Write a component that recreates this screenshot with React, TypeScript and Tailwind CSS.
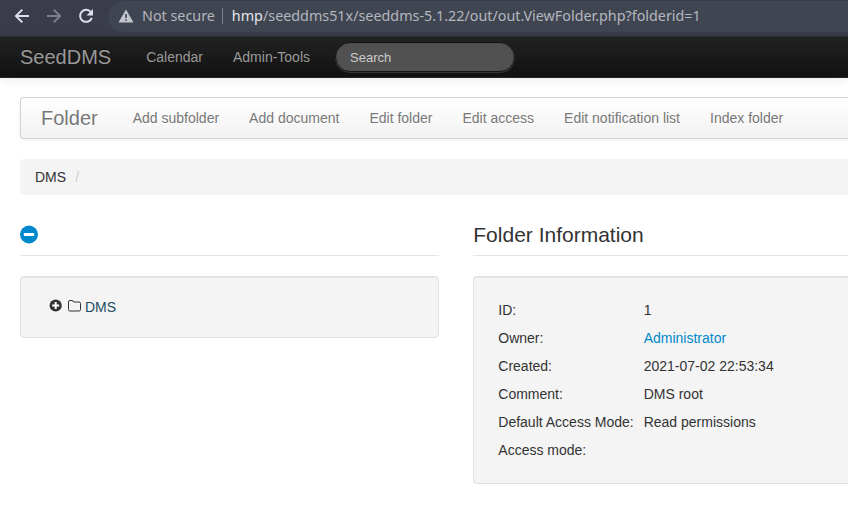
import type { ReactNode } from "react";

const actions = [
  "Add subfolder",
  "Add document",
  "Edit folder",
  "Edit access",
  "Edit notification list",
  "Index folder",
];

const details: { label: string; value: string; link?: boolean }[] = [
  { label: "ID:", value: "1" },
  { label: "Owner:", value: "Administrator", link: true },
  { label: "Created:", value: "2021-07-02 22:53:34" },
  { label: "Comment:", value: "DMS root" },
  { label: "Default Access Mode:", value: "Read permissions" },
  { label: "Access mode:", value: "" },
];

function BrowserBar() {
  return (
    <div className="flex h-9 shrink-0 items-start bg-[#3a3c4c] pl-3.5 font-['Noto_Sans',sans-serif] text-[14.33px]">
      <svg className="mt-2 h-4 w-4 shrink-0" viewBox="0 0 16 16" fill="none" stroke="#dcdfea" strokeWidth="2">
        <path d="M15 8H2.2M8.3 1.6 1.9 8l6.4 6.4" />
      </svg>
      <svg className="mt-2 ml-4 h-4 w-4 shrink-0" viewBox="0 0 16 16" fill="none" stroke="#7c7f8b" strokeWidth="2">
        <path d="M1 8h12.8M7.7 1.6 14.1 8l-6.4 6.4" />
      </svg>
      <svg className="mt-2 ml-4 h-4 w-4 shrink-0" viewBox="0 0 16 16" fill="none">
        <path d="M12.9 4.2A6 6 0 1 0 13.8 9.8" stroke="#dcdfea" strokeWidth="2" />
        <path d="M15 1v6.5H8.5z" fill="#dcdfea" />
      </svg>
      <div className="mt-px ml-3.5 flex h-[31px] min-w-0 flex-1 items-center rounded-l-full bg-[#404552] pl-2.5">
        <svg className="mb-px h-4 w-4 shrink-0" viewBox="0 0 16 16">
          <path d="M8 1.5 15.5 14.5H.5z" fill="#c3c6cd" />
          <path d="M7.2 6h1.6v4H7.2zM7.2 11.2h1.6v1.6H7.2z" fill="#404552" />
        </svg>
        <span className="mb-0.5 ml-2 whitespace-nowrap text-[#b4b7be]">Not secure</span>
        <span className="mb-px ml-[7px] h-4 w-px shrink-0 bg-[#7b7f89]" />
        <span className="mb-0.5 ml-[9px] whitespace-nowrap text-[#b4b7be]">
          <span className="text-[#e3e5eb]">hmp</span>/seeddms51x/seeddms-5.1.22/out/out.ViewFolder.php?folderid=1
        </span>
      </div>
    </div>
  );
}

function Well({ children, className }: { children: ReactNode; className: string }) {
  return (
    <div className={`border border-[#e1e1e1] bg-[#f4f4f4] shadow-[inset_0_1px_1px_rgba(0,0,0,0.05)] ${className}`}>
      {children}
    </div>
  );
}

export default function App() {
  return (
    <div className="flex h-[514px] w-[848px] flex-col overflow-hidden bg-white font-['Liberation_Sans',Arial,sans-serif] text-[14px] leading-5 text-[#333]">
      <BrowserBar />
      <nav className="flex h-[42px] shrink-0 items-center border-t border-b border-t-[#2b2c35] border-b-[#252525] bg-linear-to-b from-[#222] to-[#111] pl-5 text-[#999] shadow-[0_1px_10px_rgba(0,0,0,0.1)]">
        <span className="text-[20px] [text-shadow:0_-1px_0_rgba(0,0,0,0.25)]">SeedDMS</span>
        <span className="ml-[35px]">Calendar</span>
        <span className="ml-[30px]">Admin-Tools</span>
        <input
          className="ml-[25px] h-[30px] w-[180px] rounded-full border border-[#151515] bg-[#515151] px-[14px] text-[13px] shadow-[inset_0_1px_2px_rgba(0,0,0,0.1),0_1px_0_rgba(255,255,255,0.15)] outline-none placeholder:text-[#ccc]"
          placeholder="Search"
        />
      </nav>

      <main className="flex flex-col pt-[19px] pl-5">
        <div className="flex h-[42px] items-center rounded-l border border-r-0 border-[#d4d4d4] bg-linear-to-b from-white to-[#f2f2f2] pl-5 text-[#777] shadow-[0_1px_4px_rgba(0,0,0,0.065)] [text-shadow:0_1px_0_#fff]">
          <span className="text-[20px]">Folder</span>
          <div className="ml-[35px] flex gap-[30px] whitespace-nowrap">
            {actions.map((action) => (
              <span key={action}>{action}</span>
            ))}
          </div>
        </div>

        <div className="mt-5 flex h-9 items-center rounded-l bg-[#f4f4f4] pl-[15px]">
          <span>DMS</span>
          <span className="ml-[9px] text-[#ccc]">/</span>
        </div>

        <div className="mt-5 flex">
          <section className="w-[419px] shrink-0">
            <div className="flex h-[41px] items-center border-b border-[#e5e5e5]">
              <svg className="mb-px h-[19px] w-[18px]" viewBox="0 0 18 19">
                <circle cx="9" cy="9.5" r="9" fill="#0088cc" />
                <rect x="3.8" y="8" width="10.4" height="3" rx=".4" fill="#fff" />
              </svg>
            </div>
            <Well className="mt-5 flex h-[62px] items-center rounded pl-7">
              <svg className="mb-[3px] h-[13px] w-[13px]" viewBox="0 0 13 13">
                <circle cx="6.7" cy="6.5" r="6.1" fill="#333" />
                <path d="M6.7 3v7M3.2 6.5h7" stroke="#fff" strokeWidth="2" />
              </svg>
              <svg className="mb-0.5 ml-1.5 h-3 w-[13px]" viewBox="0 0 13 12" fill="none" stroke="#333">
                <path d="M.5 2Q.5.5 2 .5h2Q5.5.5 5.500 2H11q1.500 0 1.500 1.500v6Q12.500 11 11 11H2Q.5 11 .5 9.500z" />
              </svg>
              <span className="ml-1 text-[#234a63]">DMS</span>
            </Well>
          </section>

          <section className="ml-[34px] min-w-0 flex-1">
            <h2 className="flex h-[41px] items-center border-b border-[#e5e5e5] pl-[0.3px] text-[21px]">
              Folder Information
            </h2>
            <Well className="mt-5 h-[208px] rounded-l border-r-0 pt-[19px] pl-[24.3px]">
              {details.map(({ label, value, link }) => (
                <div key={label} className="grid h-7 grid-cols-[145.4px_1fr] items-center whitespace-nowrap">
                  <span>{label}</span>
                  <span className={link ? "text-[#0088cc]" : ""}>{value}</span>
                </div>
              ))}
            </Well>
          </section>
        </div>
      </main>
    </div>
  );
}
